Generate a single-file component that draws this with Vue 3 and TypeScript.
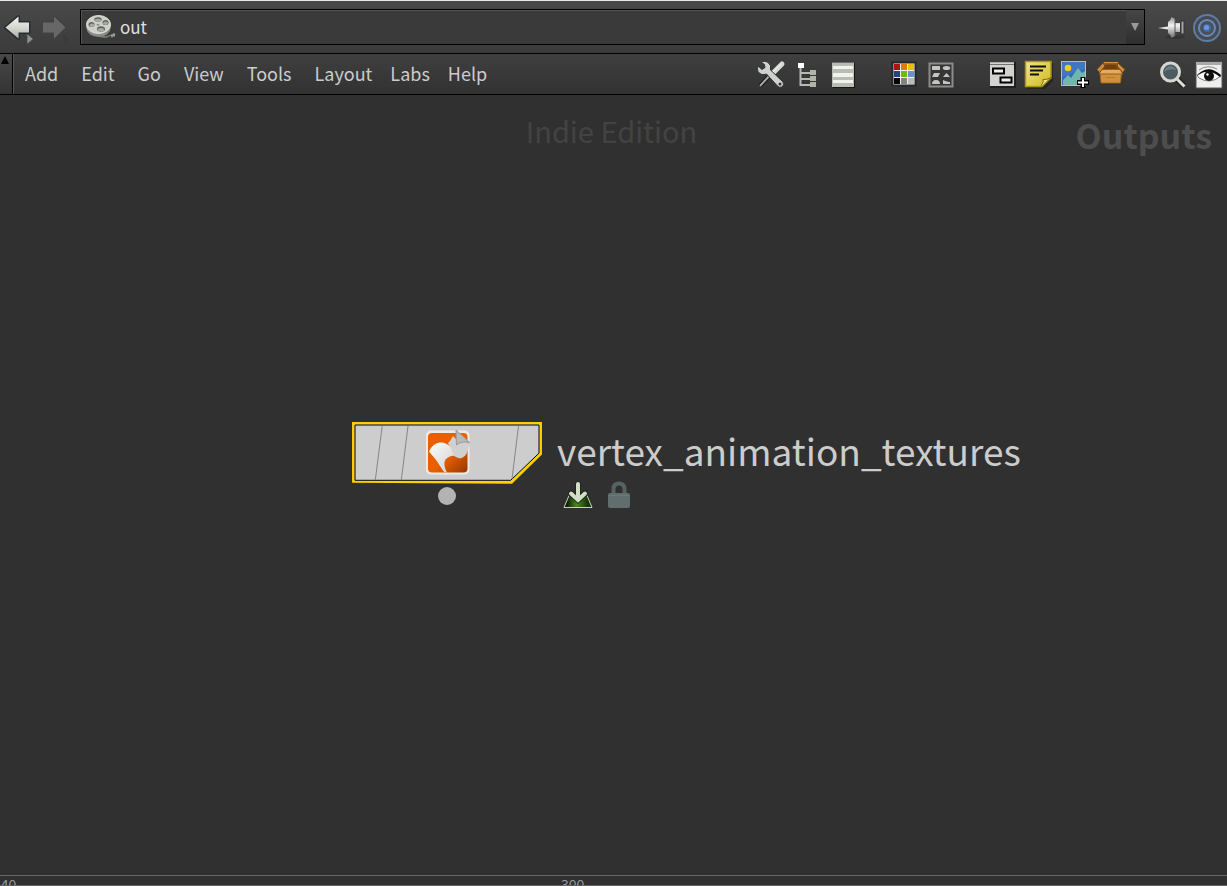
<script setup lang="ts">
import { ref } from 'vue'

const path = ref<string>('out')
const mainMenus: string[] = ['Add', 'Edit', 'Go', 'View', 'Tools', 'Layout']
const extraMenus: string[] = ['Labs', 'Help']

const swatches: { x: number; y: number; color: string }[] = [
  '#b40d0d', '#e07a00', '#dcc400',
  '#1e4584', '#67bd12', '#6c93c4',
  '#050505', '#808381', '#b9bdb6',
].map((color, i) => ({ x: 4 + (i % 3) * 7, y: 5 + Math.floor(i / 3) * 7, color }))
</script>

<template>
  <div class="pane">
    <header class="pathbar">
      <button class="icon nav" type="button" aria-label="Back">
        <svg width="36" height="36" viewBox="0 0 36 36">
          <defs>
            <linearGradient id="arrowFill" x1="0" y1="0" x2="0" y2="1">
              <stop offset="0" stop-color="#f4f4f1" />
              <stop offset=".5" stop-color="#d5d7d0" />
              <stop offset="1" stop-color="#aaada5" />
            </linearGradient>
          </defs>
          <path d="M3.500 18.500 16.500 7.500V13.500H27V23.500H16.500V29.500Z" fill="url(#arrowFill)" stroke="#272e33" stroke-width="3" stroke-linejoin="round" paint-order="stroke" />
          <path d="M25.300 25.300 31 30 25.300 34.700Z" fill="#8f8f8f" />
        </svg>
      </button>
      <button class="icon nav" type="button" aria-label="Forward">
        <svg width="36" height="36" viewBox="0 0 36 36">
          <path d="M27.500 18.500 16 7.500V13.500H5V23.500H16V29.500Z" fill="#666766" stroke="#404242" stroke-width="3" stroke-linejoin="round" paint-order="stroke" />
          <path d="M25.300 25.300 31 30 25.300 34.700Z" fill="#3a3a3a" />
        </svg>
      </button>
      <div class="field">
        <svg width="32" height="32" viewBox="0 0 32 32">
          <path d="M13 22Q18 26 22 24.500L29 22V25.500L25 25 20 27Q14 27 10 24Z" fill="#737875" />
          <path d="M26 23.500v3M28 22.500v3" stroke="#bfc2bd" />
          <ellipse cx="12.500" cy="16.500" rx="12" ry="9.500" fill="#878c86" />
          <ellipse cx="12.500" cy="13.500" rx="12" ry="9" fill="#ced0c8" stroke="#dfe1da" />
          <g fill="#60645f">
            <ellipse cx="12" cy="8.500" rx="3.700" ry="2.300" />
            <ellipse cx="5.500" cy="13.500" rx="3" ry="2.500" />
            <ellipse cx="19.500" cy="11.500" rx="3" ry="2.600" />
            <ellipse cx="15" cy="18" rx="4" ry="2.700" />
          </g>
          <g fill="#a5aaa3">
            <ellipse cx="12" cy="9.300" rx="3" ry="1.500" />
            <ellipse cx="6" cy="14.300" rx="2.300" ry="1.700" />
            <ellipse cx="19.500" cy="12.300" rx="2.300" ry="1.800" />
            <ellipse cx="15" cy="18.800" rx="3.200" ry="1.900" />
          </g>
          <ellipse cx="12" cy="13.800" rx="1.500" ry="1" fill="#8b9089" />
        </svg>
        <input v-model="path" class="path" type="text" aria-label="Network path" />
        <button class="drop" type="button" aria-label="Path history">
          <svg width="10" height="10" viewBox="0 0 10 10"><path d="M1 1H9L5 9Z" fill="#999" /></svg>
        </button>
      </div>
      <div class="links">
        <button class="icon" type="button" aria-label="Pin">
          <svg width="30" height="30" viewBox="0 0 30 30">
            <defs>
              <linearGradient id="pinFill" x1="0" y1="0" x2="0" y2="1">
                <stop offset="0" stop-color="#8f8f8f" />
                <stop offset=".4" stop-color="#f2f2f2" />
                <stop offset="1" stop-color="#6c6c6c" />
              </linearGradient>
            </defs>
            <ellipse cx="18" cy="25" rx="10" ry="2" fill="#292929" opacity=".5" />
            <path d="M1 16 11 14.500V17.500Z" fill="#ececec" />
            <path d="M11 10Q14 8 14.500 5L18 7V11H23V20H18V24L14.500 26Q14 23 11 21Z" fill="url(#pinFill)" />
            <path d="M18 7V24" stroke="#555" />
            <path d="M24 9h3v13h-3z" fill="#a5a5a5" stroke="#333" />
          </svg>
        </button>
        <button class="icon" type="button" aria-label="Link group">
          <svg width="30" height="30" viewBox="0 0 30 30" fill="none">
            <circle cx="15" cy="16" r="13" stroke="#5d7ba5" stroke-width="2" fill="#454b52" />
            <circle cx="15" cy="16" r="8" stroke="#6a88b4" stroke-width="2" fill="#4a5059" />
            <circle cx="15" cy="16" r="4" fill="#4668a0" />
            <circle cx="14.500" cy="15.500" r="2.500" fill="#6c98dc" />
          </svg>
        </button>
      </div>
    </header>

    <div class="menubar">
      <button class="collapse" type="button" aria-label="Collapse toolbar">
        <svg width="10" height="10" viewBox="0 0 10 10"><path d="M1 9H9L5 1Z" fill="#000" /></svg>
      </button>
      <nav class="menus">
        <div class="menugroup">
          <button v-for="m in mainMenus" :key="m" class="menu" type="button">{{ m }}</button>
        </div>
        <div class="menugroup extra">
          <button v-for="m in extraMenus" :key="m" class="menu" type="button">{{ m }}</button>
        </div>
      </nav>
      <div class="tools">
        <div class="group">
          <button class="icon" type="button" aria-label="Network tools">
            <svg width="30" height="30" viewBox="0 0 30 30">
              <path d="M14 16 4 27" stroke="#111" stroke-width="4" />
              <path d="M15 15 4 27" stroke="#a7aaa7" stroke-width="2" />
              <path d="M26 5 17 14" stroke="#d7d9d5" stroke-width="5" stroke-linecap="round" />
              <path d="M25 5 16 14" stroke="#f3f3f1" stroke-width="1" />
              <path d="M5 3Q8 1.500 11.500 3 16 6 14.500 11L27 23Q28.500 26 26 28 23 29 21.500 27L10.500 15Q5 17 2 12.500 1 9.500 2 7L6 10.500 9 8.500 8.500 5.500Z" fill="#cfd1cd" stroke="#303331" />
              <circle cx="24" cy="25" r="1.500" fill="#333" />
            </svg>
          </button>
          <button class="icon" type="button" aria-label="Tree view">
            <svg width="30" height="30" viewBox="0 0 30 30">
              <path d="M8.500 9V26H18M8.500 14H18M8.500 20H18" fill="none" stroke="#b7bab2" stroke-width="2" />
              <path d="M6 4h6v5H6z" fill="#fff" />
              <path d="M18 11h6v5h-6zM18 17h6v5h-6zM18 23h6v5h-6z" fill="#aeb4a6" />
            </svg>
          </button>
          <button class="icon" type="button" aria-label="List view">
            <svg width="30" height="30" viewBox="0 0 30 30">
              <path d="M5 4H27V29H5z" fill="#171717" />
              <path d="M4 3H26V28H4z" fill="#b9bcb2" />
              <path d="M5 7h20v3H5zM5 14h20v4H5zM5 21h20v3H5z" fill="#f1f1ee" />
              <path d="M4 3.500H26" stroke="#686b63" />
            </svg>
          </button>
        </div>
        <div class="group">
          <button class="icon" type="button" aria-label="Color palette">
            <svg width="30" height="30" viewBox="0 0 30 30">
              <rect x="2.500" y="3.500" width="23" height="23" fill="#f2f2f0" stroke="#22282f" stroke-width="2" />
              <rect v-for="s in swatches" :key="s.color" :x="s.x" :y="s.y" width="6" height="6" :fill="s.color" />
            </svg>
          </button>
          <button class="icon" type="button" aria-label="Shape palette">
            <svg width="30" height="30" viewBox="0 0 30 30">
              <rect x="3.500" y="4.500" width="23" height="23" fill="#363636" stroke="#8b8d8a" stroke-width="2" />
              <g fill="#c3c5c1">
                <path d="M6 7h8v4H6zM8 14h6l-2 4H6zM17 18l3.500-4 3.500 4zM6 25q0-4 4-4t4 4zM17 21q5 2 7 2v2h-7z" />
                <ellipse cx="20.500" cy="9" rx="3.700" ry="2" />
              </g>
            </svg>
          </button>
        </div>
        <div class="group">
          <button class="icon" type="button" aria-label="Create network box">
            <svg width="30" height="30" viewBox="0 0 30 30">
              <path d="M2 3H28V29H2z" fill="#1c2022" />
              <path d="M2 3H26V27H2z" fill="#d2d3cf" />
              <path d="M2 3.500H26" stroke="#aaaea9" />
              <path d="M2 5.500H26" stroke="#6d7370" />
              <path d="M5 9.500h11v5H5zM12.500 18.500h11v5h-11z" fill="#eee" stroke="#000" stroke-width="2" />
            </svg>
          </button>
          <button class="icon" type="button" aria-label="Create sticky note">
            <svg width="30" height="30" viewBox="0 0 30 30">
              <defs>
                <linearGradient id="noteFill" x1="0" y1="0" x2="1" y2="1">
                  <stop offset="0" stop-color="#efe68a" />
                  <stop offset="1" stop-color="#d0b91f" />
                </linearGradient>
              </defs>
              <path d="M2 4H29V22L21 30H3z" fill="#1d1d1d" opacity=".6" />
              <path d="M1.500 2.500H27V19L18 27.500H1.500z" fill="url(#noteFill)" stroke="#ae9709" stroke-width="1.500" />
              <path d="M27 18.500 18 27.500Q16.500 27 18 25 20 23 19 20.500 23 21 27 18.500Z" fill="#eee38a" stroke="#806d06" />
              <path d="M6 7.500h16M6 11.500h13M6 15.500h9" stroke="#111" stroke-width="2" />
            </svg>
          </button>
          <button class="icon" type="button" aria-label="Add image">
            <svg width="30" height="30" viewBox="0 0 30 30">
              <rect x="1.500" y="2.500" width="24" height="24" fill="#316cba" stroke="#b5bbc2" />
              <path d="M2 3H25V10L2 18z" fill="#4b83c9" opacity=".5" />
              <circle cx="8" cy="9" r="3.300" fill="#edce18" />
              <path d="M3 24V21L8 16 11 19 18 9 22 14 25 12V26H3z" fill="#71b6ad" />
              <path d="M23 18v11M17 23.500h12" stroke="#000" stroke-width="5" />
              <path d="M23 19v9M18 23.500h10" stroke="#fff" stroke-width="2" />
            </svg>
          </button>
          <button class="icon" type="button" aria-label="Asset box">
            <svg width="30" height="30" viewBox="0 0 30 30">
              <ellipse cx="15" cy="23.500" rx="12" ry="2" fill="#222" opacity=".5" />
              <path d="M4 13H25.500L24.500 24H5Z" fill="#d0913d" stroke="#a1661e" />
              <path d="M8 3.500H22L26 11H3Z" fill="#9a5f1c" stroke="#d29342" />
              <path d="M10 5.500H20L22 10H7Z" fill="#6f410f" />
              <path d="M4.500 10.500H24.500L26.500 15H3.500Z" fill="#e2ab5d" stroke="#9c5e19" />
              <path d="M7 4 1 10.500 3.500 13.500 9 7ZM22 4 29 10.500 26.500 13.500 21 7Z" fill="#cc8f3e" stroke="#774512" />
              <path d="M10 18.500h9" stroke="#b77b2d" />
            </svg>
          </button>
        </div>
        <div class="group">
          <button class="icon" type="button" aria-label="Find">
            <svg width="30" height="30" viewBox="0 0 30 30">
              <path d="M18 19 26 27" stroke="#222" stroke-width="6" />
              <path d="M18 19 26.500 27.500" stroke="#dedfdb" stroke-width="3" />
              <circle cx="12.500" cy="13" r="9" fill="#4c5a61" stroke="#d6d6d1" stroke-width="3" />
              <path d="M6 13Q7 7 13 7 17 8 18 11 11 9 6 13Z" fill="#6d7c83" />
            </svg>
          </button>
          <button class="icon" type="button" aria-label="Display options">
            <svg width="30" height="30" viewBox="0 0 30 30">
              <path d="M2 3H28V29H2z" fill="#eeeeec" stroke="#555" />
              <path d="M2 3H28V6H2z" fill="#a9aaa8" />
              <path d="M3 16Q13 7 27 17 16 26 5 19Z" fill="#fff" stroke="#777" />
              <path d="M3 17Q13 4 27 16L26 18Q14 8 3 17Z" fill="#090909" />
              <path d="M5 11Q13 5 23 10" fill="none" stroke="#888" />
              <circle cx="15" cy="17" r="5" fill="#111" />
              <circle cx="13.500" cy="15.500" r="1.200" fill="#fff" />
            </svg>
          </button>
        </div>
      </div>
    </div>

    <main class="canvas">
      <p class="edition">Indie Edition</p>
      <h1 class="context">Outputs</h1>

      <div class="node">
        <div class="body">
          <svg width="190" height="65" viewBox="0 0 190 65">
            <path d="M1.300 1.300H188.700V32L159.500 60.500 1.300 59.500Z" fill="#cdcdcd" stroke="#ffd000" stroke-width="2.500" />
            <path d="M3 3H187V31.200L158.700 58.300H3Z" fill="#cdcdcd" stroke="#050505" />
            <path d="M30.200 4 23.300 58M56 4 49.300 58M166.500 4 160 57" stroke="#858585" />
            <defs>
              <linearGradient id="tileFill" x1="0" y1="0" x2="1" y2="1">
                <stop offset=".55" stop-color="#e86000" />
                <stop offset="1" stop-color="#963700" />
              </linearGradient>
              <linearGradient id="sheetFill" x1="0" y1="0" x2="1" y2="1">
                <stop offset="0" stop-color="#fdfdfd" />
                <stop offset="1" stop-color="#cfcfcf" />
              </linearGradient>
            </defs>
            <rect x="74" y="8.500" width="43.500" height="44" rx="5" fill="#f0eae6" />
            <rect x="76" y="11" width="39.500" height="39.500" rx="4" fill="url(#tileFill)" />
            <path d="M96 21 98 19 101 14 104 17H110L117 22 115.500 29Q114 35 108 36.500 104 36 101 33Z" fill="#d0d0d0" />
            <path d="M77 29.500Q81 21 88 20.500 95 20 99 26 100 31 103 33.500 94 34 92.500 40 92 45 95 50.500 92 51 90 47 84 37 77 29.500Z" fill="url(#sheetFill)" />
            <path d="M104 8 118 20.500V27L115 22Q109 20 104.500 23Z" fill="#cfcfcf" />
            <path d="M104 8 117.500 20.500Q109 18.500 104.500 23Z" fill="#b9b9b9" stroke="#999" />
          </svg>
          <span class="port"></span>
        </div>
        <div class="info">
          <div class="name">vertex_animation_textures</div>
          <div class="flags">
            <svg width="30" height="28" viewBox="0 0 30 28" role="img" aria-label="Render output">
              <defs>
                <linearGradient id="grass" x1="0" y1="0" x2="1" y2="0">
                  <stop offset=".1" stop-color="#101a08" />
                  <stop offset=".45" stop-color="#458c17" />
                  <stop offset=".85" stop-color="#173607" />
                </linearGradient>
              </defs>
              <path d="M1 26.500 6 14.500H24L29 26.500Z" fill="url(#grass)" stroke="#c9d0c3" />
              <path d="M6 14.500H24" stroke="#303030" stroke-width="2" />
              <path d="M15 3V18M8 12.500 15 19 22 12.500" fill="none" stroke="#1e281a" stroke-width="6" stroke-linecap="round" />
              <path d="M15 3V18M8 12.500 15 19 22 12.500" fill="none" stroke="#d4ddc6" stroke-width="4" stroke-linecap="round" />
            </svg>
            <svg width="24" height="28" viewBox="0 0 24 28" role="img" aria-label="Locked">
              <path d="M6.500 14V8Q6.500 2.500 12 2.500T17.500 8V14" fill="none" stroke="#566363" stroke-width="4" />
              <rect x="1" y="12" width="22" height="15" rx="2" fill="#616e6e" />
              <path d="M2 14.500H22" stroke="#6c7979" />
            </svg>
          </div>
        </div>
      </div>
    </main>

    <footer class="ruler">
      <span class="tick first">240</span>
      <span class="tick second">300</span>
    </footer>
  </div>
</template>

<style>
html,
body {
  background: #303030;
}
</style>

<style scoped>
.pane {
  display: flex;
  flex-direction: column;
  height: 100vh;
  overflow: hidden;
  background: #303030;
  color: #ccc;
  font-family: "Noto Sans CJK SC", "Noto Sans", sans-serif;
}

button {
  margin: 0;
  padding: 0;
  border: 0;
  background: none;
  color: inherit;
  font: inherit;
}

svg {
  display: block;
  flex: none;
}

.pathbar {
  display: flex;
  align-items: center;
  flex: none;
  box-sizing: border-box;
  height: 54px;
  padding: 0 5px 0 2px;
  border-top: 1px solid #e6ecea;
  border-bottom: 1px solid #000;
  background: linear-gradient(#494949, #3b3b3b);
}

.field {
  display: flex;
  align-items: center;
  flex: 1;
  box-sizing: border-box;
  height: 36px;
  margin: 0 12px 0 6px;
  padding-left: 5px;
  border: 1px solid #000;
  background: #3a3a3a;
  box-shadow: inset 1px 1px #555;
}

.path {
  flex: 1;
  min-width: 0;
  box-sizing: border-box;
  height: 28px;
  padding: 0 0 2px 2px;
  border: 0;
  outline: 0;
  background: none;
  color: #e0e0e0;
  font: 17px/26px "Noto Sans CJK SC", "Noto Sans", sans-serif;
}

.drop {
  display: flex;
  align-items: center;
  justify-content: center;
  width: 18px;
  height: 34px;
  background: linear-gradient(#464646, #2e2e2e);
}

.links {
  display: flex;
  gap: 5px;
}

.menubar {
  display: flex;
  flex: none;
  box-sizing: border-box;
  height: 41px;
  border-bottom: 1px solid #000;
  background: linear-gradient(#3f3f3f, #323232);
}

.collapse {
  display: flex;
  align-items: flex-start;
  width: 13px;
  padding: 1px 0 0;
  border-right: 1px solid #000;
  background: linear-gradient(#494949, #333);
}

.menus {
  display: flex;
  gap: 18px;
  padding-left: 11px;
  border-left: 1px solid #555;
}

.menugroup {
  display: flex;
  align-items: flex-start;
  gap: 23px;
}

.extra {
  gap: 18px;
}

.menu {
  font-size: 18px;
  line-height: 38px;
}

.tools {
  display: flex;
  align-items: center;
  gap: 32px;
  margin-left: auto;
  padding-right: 3px;
}

.group {
  display: flex;
  gap: 6px;
}

.canvas {
  position: relative;
  flex: 1;
  min-height: 0;
}

.edition {
  margin: 0;
  padding: 15px 4px 0 0;
  color: #434343;
  font-size: 29px;
  line-height: 40px;
  text-align: center;
}

.context {
  position: absolute;
  top: 18px;
  right: 15px;
  margin: 0;
  color: #4d4d4d;
  font-size: 34px;
  font-weight: 700;
  line-height: 44px;
}

.node {
  position: absolute;
  top: 327px;
  left: 352px;
  display: flex;
  gap: 15px;
}

.body {
  display: flex;
  flex-direction: column;
  align-items: center;
}

.port {
  width: 18px;
  height: 18px;
  border-radius: 50%;
  background: #b3b3b3;
}

.name {
  font-size: 37px;
  line-height: 56px;
}

.flags {
  display: flex;
  gap: 14px;
  padding: 3px 0 0 6px;
}

.ruler {
  position: relative;
  flex: none;
  height: 11px;
  overflow: hidden;
  box-sizing: border-box;
  border-top: 1px solid #666;
  border-bottom: 1px solid #666;
  color: #999;
  font-size: 14px;
  line-height: 16px;
}

.tick {
  position: absolute;
  top: 0;
}

.first {
  left: -7px;
}

.second {
  left: 561px;
}
</style>
